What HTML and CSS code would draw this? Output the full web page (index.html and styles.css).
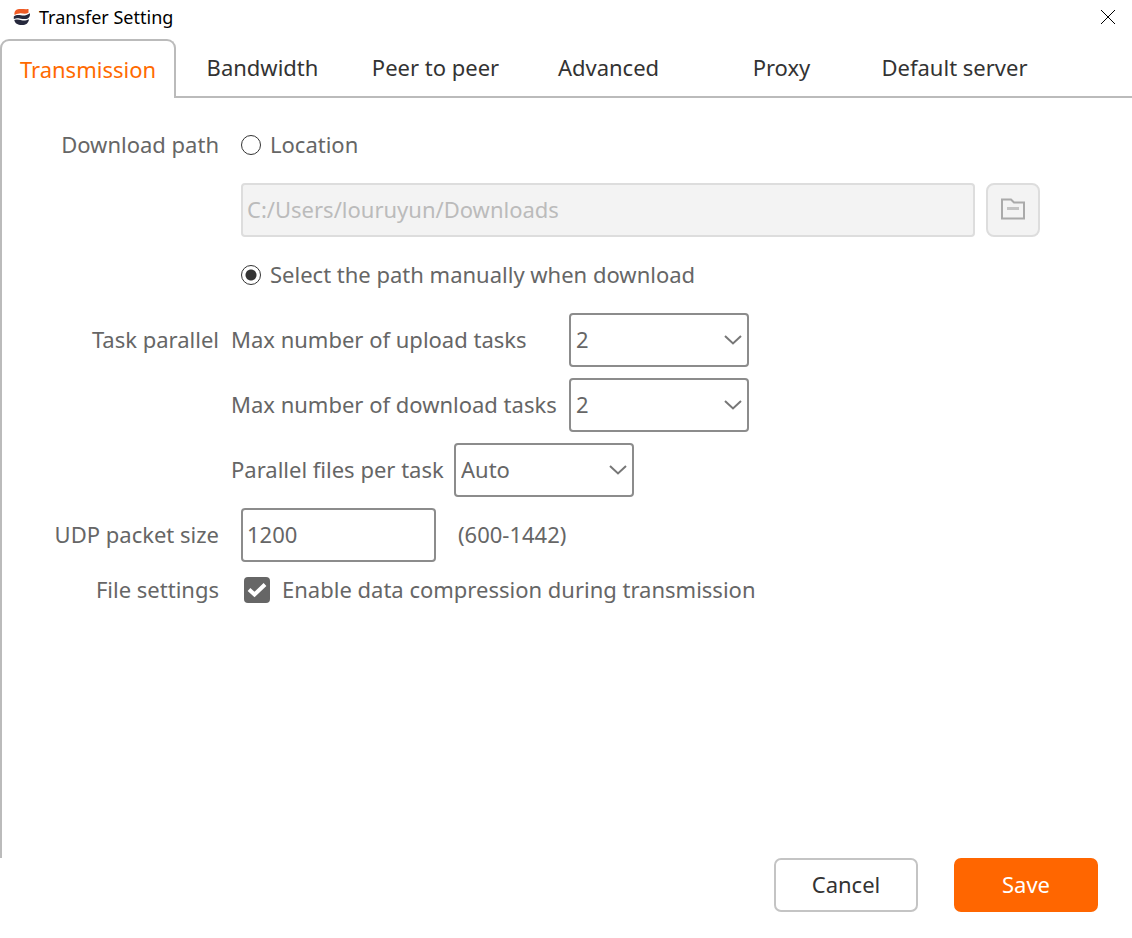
FILE: index.html
```html
<!DOCTYPE html>
<html lang="en">
<head>
<meta charset="utf-8">
<meta name="viewport" content="width=device-width, initial-scale=1">
<title>Transfer Setting</title>
<link rel="stylesheet" href="styles.css">
</head>
<body>
<form class="dialog">
  <header class="titlebar">
    <svg class="logo" viewBox="0 0 18 18" aria-hidden="true">
      <path fill="#ee5a24" d="M1.500 7C1 3.500 3 1.500 6 1.100C9 0.700 12 1.500 15.500 1.100V4.800C12 6.600 9.500 5 6.500 5.400C4 5.600 3 6.200 1.500 7Z"/>
      <path fill="#26283c" d="M0.800 8.400C3 6.800 5.500 6.800 8 7.300C11.500 8 13.500 7.200 17 5.200C17.200 9 15.500 11 12 11.100C8.500 11.300 7.500 10.200 5 10.300C3.500 10.300 2.500 10.500 0.800 11Z"/>
      <path fill="#26283c" d="M1.300 12.100C4 11.200 6 11.600 8.500 12.200C11.500 12.800 13.500 12.200 16 11.200C15.500 15.200 13 17 9 17.100C5 17.200 2 15.800 1.300 12.100Z"/>
    </svg>
    <h1 class="title">Transfer Setting</h1>
    <button class="close" type="button" aria-label="Close">
      <svg viewBox="0 0 16 16" aria-hidden="true"><path d="M1 1L15 15M15 1L1 15"/></svg>
    </button>
  </header>

  <nav class="tabs" role="tablist">
    <button class="tab tab-active" type="button" role="tab" aria-selected="true">Transmission</button>
    <button class="tab" type="button" role="tab">Bandwidth</button>
    <button class="tab" type="button" role="tab">Peer to peer</button>
    <button class="tab" type="button" role="tab">Advanced</button>
    <button class="tab" type="button" role="tab">Proxy</button>
    <button class="tab" type="button" role="tab">Default server</button>
    <span class="tab-rest"></span>
  </nav>

  <main class="panel">
    <div class="row">
      <span class="label">Download path</span>
      <div class="field inset">
        <input class="radio" type="radio" name="path" id="location">
        <label for="location">Location</label>
      </div>
    </div>
    <div class="row">
      <span class="label"></span>
      <div class="field inset path-field">
        <input class="box path" type="text" value="C:/Users/louruyun/Downloads" aria-label="Download location" disabled>
        <button class="browse" type="button" aria-label="Browse" disabled>
          <svg viewBox="0 0 26 22" aria-hidden="true">
            <path class="folder" d="M2 1.500H11L14 4.500H24V20.500H2Z"/>
            <path class="folder-line" d="M7 10.500H19"/>
          </svg>
        </button>
      </div>
    </div>
    <div class="row">
      <span class="label"></span>
      <div class="field inset">
        <input class="radio" type="radio" name="path" id="manual" checked>
        <label for="manual">Select the path manually when download</label>
      </div>
    </div>
    <div class="row">
      <span class="label">Task parallel</span>
      <div class="field">
        <label class="wide" for="uploads">Max number of upload tasks</label>
        <span class="select"><select class="box" id="uploads"><option>2</option></select>
        <svg class="chevron" viewBox="0 0 20 12" aria-hidden="true"><path d="M2 2L10 9.500L18 2"/></svg></span>
      </div>
    </div>
    <div class="row">
      <span class="label"></span>
      <div class="field">
        <label class="wide" for="downloads">Max number of download tasks</label>
        <span class="select"><select class="box" id="downloads"><option>2</option></select>
        <svg class="chevron" viewBox="0 0 20 12" aria-hidden="true"><path d="M2 2L10 9.500L18 2"/></svg></span>
      </div>
    </div>
    <div class="row">
      <span class="label"></span>
      <div class="field">
        <label class="narrow" for="files">Parallel files per task</label>
        <span class="select"><select class="box" id="files"><option>Auto</option></select>
        <svg class="chevron" viewBox="0 0 20 12" aria-hidden="true"><path d="M2 2L10 9.500L18 2"/></svg></span>
      </div>
    </div>
    <div class="row">
      <label class="label" for="packet">UDP packet size</label>
      <div class="field inset">
        <input class="box packet" type="text" id="packet" value="1200">
        <span class="hint">(600-1442)</span>
      </div>
    </div>
    <div class="row row-short">
      <span class="label">File settings</span>
      <div class="field inset">
        <span class="check">
          <input class="checkbox" type="checkbox" id="compress" checked>
          <svg class="tick" viewBox="0 0 26 26" aria-hidden="true"><path d="M5 12.500L10.500 17.500L21 7.500"/></svg>
        </span>
        <label for="compress">Enable data compression during transmission</label>
      </div>
    </div>
  </main>

  <footer class="actions">
    <button class="button" type="button">Cancel</button>
    <button class="button button-primary" type="submit">Save</button>
  </footer>
</form>
</body>
</html>
```
FILE: styles.css
```css
* { box-sizing: border-box; }

body {
  margin: 0;
  background: #fff;
  color: #666;
  font: 22px/32px "Noto Sans", "Open Sans", sans-serif;
}

button, input, select { font: inherit; color: inherit; margin: 0; }

.dialog { display: flex; flex-direction: column; min-height: 100vh; }

.titlebar {
  display: flex;
  align-items: center;
  height: 39px;
  padding: 0 14px 5px 13px;
}
.logo { width: 18px; height: 18px; }
.title {
  flex: 1;
  margin: 0 0 0 8px;
  color: #000;
  font-size: 18px;
  line-height: 24px;
  font-weight: 400;
}
.close { display: flex; padding: 2px; border: 0; background: none; }
.close svg { width: 16px; height: 16px; fill: none; stroke: #000; stroke-width: 1; }

.tabs { display: flex; height: 59px; }
.tab {
  flex: 0 1 173px;
  padding: 0 0 2px;
  border: 0;
  border-bottom: 2px solid #bbb;
  background: none;
  color: #333;
  white-space: nowrap;
}
.tab-active {
  flex-basis: 176px;
  border: 2px solid #bbb;
  border-bottom: 0;
  border-radius: 9px 9px 0 0;
  color: #ff6a00;
}
.tab-rest { flex: 1; border-bottom: 2px solid #bbb; }

.panel {
  flex: 1;
  display: flex;
  flex-direction: column;
  gap: 11px;
  padding-top: 20px;
  border-left: 2px solid #bbb;
}
.row {
  display: grid;
  grid-template-columns: 217px 1fr;
  column-gap: 12px;
  align-items: center;
  min-height: 54px;
}
.row-short { min-height: 34px; }
.label { text-align: right; white-space: nowrap; }
.field { display: flex; align-items: center; white-space: nowrap; }
.inset { padding-left: 10px; }
.label, .field label, .hint { padding-bottom: 2px; }

.radio {
  appearance: none;
  width: 20px;
  height: 20px;
  margin-right: 9px;
  border: 1px solid #333;
  border-radius: 50%;
}
.radio:checked { background: radial-gradient(circle, #333 5px, #fff 6px); }

.box {
  height: 54px;
  padding: 0 4px 2px;
  border: 2px solid #8c8c8c;
  border-radius: 4px;
  background: #fff;
}
.path-field { gap: 11px; padding-right: 92px; }
.path { flex: 1; min-width: 0; border-color: #ddd; background: #f3f3f3; color: #bbb; }
.browse {
  display: grid;
  place-items: center;
  width: 54px;
  height: 54px;
  padding: 0 0 2px;
  border: 2px solid #ddd;
  border-radius: 8px;
  background: #f3f3f3;
}
.browse svg { width: 26px; height: 22px; fill: none; stroke-width: 2; }
.folder { stroke: #aaa; }
.folder-line { stroke: #c4c4c4; stroke-width: 3; }

.wide { width: 338px; }
.narrow { width: 223px; }
.select { display: grid; align-items: center; width: 180px; }
.select > * { grid-area: 1 / 1; }
.select .box { appearance: none; width: 100%; padding: 0 5px 2px; }
.chevron {
  justify-self: end;
  width: 20px;
  height: 12px;
  margin-right: 6px;
  fill: none;
  stroke: #777;
  stroke-width: 2;
  pointer-events: none;
}

.packet { width: 195px; }
.hint { margin-left: 22px; }

.check { display: grid; margin: 0 12px 0 3px; }
.check > * { grid-area: 1 / 1; width: 26px; height: 26px; }
.checkbox { appearance: none; border-radius: 4px; background: #666; }
.tick { fill: none; stroke: #fff; stroke-width: 4; pointer-events: none; }

.actions {
  display: flex;
  justify-content: flex-end;
  gap: 36px;
  padding: 0 34px 26px;
}
.button {
  width: 144px;
  height: 54px;
  padding: 0 0 2px;
  border: 2px solid #c4c4c4;
  border-radius: 7px;
  background: #fff;
  color: #333;
}
.button-primary { border-color: #ff6600; background: #ff6600; color: #fff; }
```
